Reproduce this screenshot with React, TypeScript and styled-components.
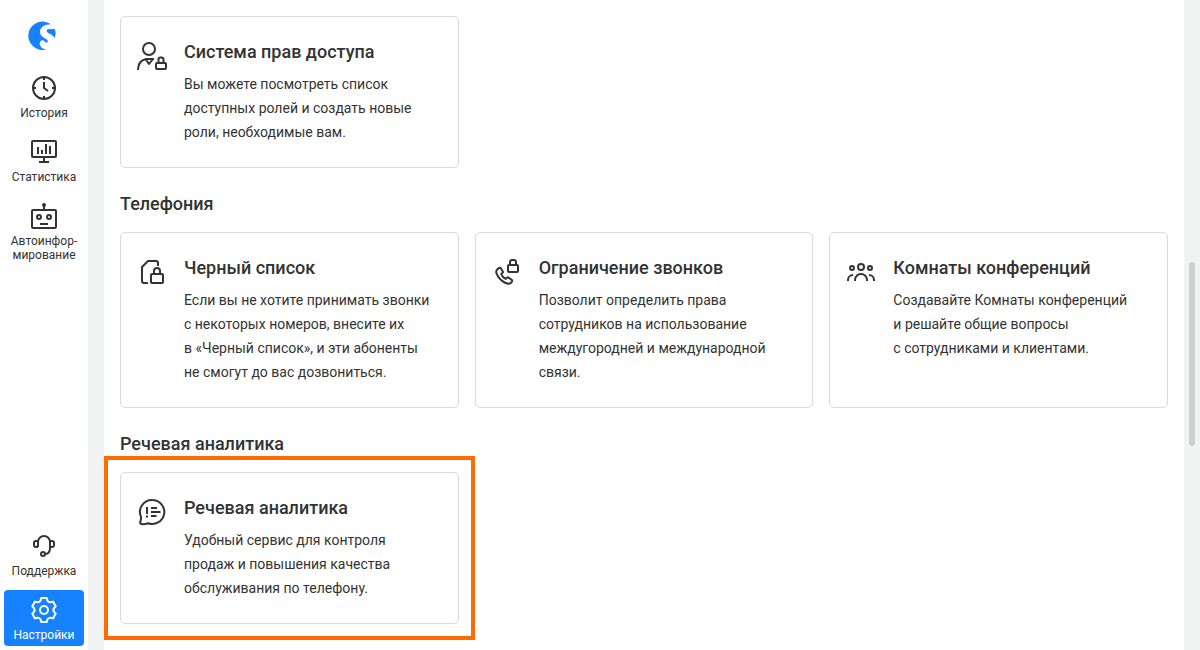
import React from "react";
import styled, { createGlobalStyle } from "styled-components";

const GlobalStyle = createGlobalStyle`
  *, *::before, *::after { box-sizing: border-box; }
  body {
    margin: 0;
    background: #f1f3f3;
    color: #333;
    font-family: Roboto, "Noto Sans", sans-serif;
  }
`;

const Shell = styled.div`
  display: flex;
  gap: 16px;
  height: 100vh;
  overflow: hidden;
`;

const Sidebar = styled.nav`
  flex: 0 0 88px;
  display: flex;
  flex-direction: column;
  gap: 8px;
  padding: 20px 4px 4px;
  background: #fff;
`;

const Logo = styled.a`
  align-self: center;
  width: 32px;
  height: 32px;
  margin-bottom: 8px;
`;

const Spacer = styled.div`
  flex: 1;
`;

const NavItem = styled.a<{ $active?: boolean }>`
  display: flex;
  flex-direction: column;
  align-items: center;
  gap: 2px;
  padding: 4px 0;
  border-radius: 4px;
  font-size: 12px;
  line-height: 14px;
  text-align: center;
  white-space: pre-line;
  text-decoration: none;
  color: ${(p) => (p.$active ? "#fff" : "#333")};
  background: ${(p) => (p.$active ? "#1682ff" : "transparent")};
`;

const Icon = styled.svg`
  display: block;
  flex: none;
  width: 32px;
  height: 32px;
  fill: none;
  stroke: currentColor;
  stroke-width: 2;
  stroke-linejoin: round;
`;

const Content = styled.main`
  flex: 1;
  min-width: 0;
  display: flex;
  flex-direction: column;
  gap: 24px;
  padding: 16px;
  background: #fff;
`;

const Section = styled.section`
  display: flex;
  flex-direction: column;
  gap: 16px;
`;

const SectionTitle = styled.h2`
  margin: 0;
  font-size: 18px;
  line-height: 24px;
  font-weight: 500;
`;

const CardGrid = styled.div`
  display: grid;
  grid-template-columns: repeat(3, minmax(0, 1fr));
  gap: 16px;
`;

const Card = styled.a<{ $highlighted?: boolean }>`
  position: relative;
  display: flex;
  gap: 16px;
  padding: 23px 23px 23px 15px;
  border: 1px solid #d9dbdb;
  border-radius: 5px;
  color: inherit;
  text-decoration: none;

  &::after {
    content: "";
    display: ${(p) => (p.$highlighted ? "block" : "none")};
    position: absolute;
    inset: -17px;
    border: 4px solid #ff6b00;
    pointer-events: none;
  }
`;

const CardBody = styled.div`
  display: flex;
  flex-direction: column;
  gap: 8px;
  min-width: 0;
`;

const CardTitle = styled.h3`
  margin: 0;
  font-size: 18px;
  line-height: 24px;
  font-weight: 500;
`;

const CardText = styled.p`
  margin: 0;
  font-size: 14px;
  line-height: 24px;
`;

const ScrollRail = styled.div`
  flex: 0 0 16px;
  margin-left: -16px;
  padding: 262px 5px 0;
`;

const ScrollThumb = styled.div`
  height: 184px;
  border-radius: 3px;
  background: #cdcfce;
`;

const BrandMark = () => (
  <svg width="32" height="32" viewBox="2.5 0 32 32" overflow="visible" aria-hidden="true">
    <path
      fill="#1682ff"
      d="M25.600 4.300A14.300 14.300 0 1 0 20.500 29.700C17 28.900 14.600 26.900 14.200 24.300C13.900 22.200 15.200 20.300 17 20.300C18.900 20.300 19.200 22.300 20.700 22.500C22 22.600 22.600 21.700 22.300 20.700C21.600 18.600 14.900 17.300 14.500 12.200C14.200 7.600 19 4.200 25.600 4.300Z"
    />
    <path
      fill="#1682ff"
      d="M29.400 9.300C27.600 8.700 26.200 9.700 24.400 9.100C22.600 8.600 20.800 9.600 21.200 11.200C21.800 13.500 27.600 14.200 29 18.100C30.400 15.300 30.500 12.200 29.400 9.300Z"
    />
  </svg>
);

const HistoryIcon = () => (
  <Icon viewBox="0 0 32 32" aria-hidden="true">
    <circle cx="16" cy="16" r="11" />
    <path d="M16 5v3M16 24v3M5 16h3M24 16h3M16 10v6l4 3" />
  </Icon>
);

const StatsIcon = () => (
  <Icon viewBox="0 0 32 32" aria-hidden="true">
    <rect x="4" y="5" width="24" height="16" rx="1" />
    <path d="M16 21v5M11 26h10M10 11v7M14 14v4M18 8v10M22 10v8" />
  </Icon>
);

const RobotIcon = () => (
  <Icon viewBox="0 0 32 32" aria-hidden="true">
    <rect x="4" y="10" width="24" height="18" rx="1" />
    <path d="M16 10V5M12 24h8" />
    <circle cx="16" cy="5" r="1" />
    <circle cx="11" cy="17" r="2" />
    <circle cx="21" cy="17" r="2" />
  </Icon>
);

const HeadsetIcon = () => (
  <Icon viewBox="0 0 32 32" aria-hidden="true">
    <path d="M10 17v-5a6 6 0 0 1 12 0v6c0 3.500-1.700 6-5 6" />
    <path d="M10 11H8a2 2 0 0 0-2 2v2a2 2 0 0 0 2 2h2M22 11h2a2 2 0 0 1 2 2v2a2 2 0 0 1-2 2h-2" />
    <circle cx="15" cy="24" r="2" />
  </Icon>
);

/* Six teeth, each a flat outer edge joined to the next by a concave curve. */
const polar = (radius: number, degrees: number) => {
  const angle = (degrees * Math.PI) / 180;
  return `${(16 + radius * Math.sin(angle)).toFixed(2)} ${(16 - radius * Math.cos(angle)).toFixed(2)}`;
};

const gearPath =
  [0, 60, 120, 180, 240, 300]
    .map(
      (a) =>
        `${a === 0 ? "M" : "L"}${polar(12.3, a - 13)}L${polar(12.3, a + 13)}` +
        `L${polar(10.3, a + 19)}Q${polar(8.6, a + 30)} ${polar(10.3, a + 41)}`
    )
    .join("") + "Z";

const GearIcon = () => (
  <Icon viewBox="0 0 32 32" aria-hidden="true">
    <path d={gearPath} />
    <circle cx="16" cy="16" r="4" />
  </Icon>
);

const AccessIcon = () => (
  <Icon viewBox="0 0 32 32" aria-hidden="true">
    <circle cx="13" cy="9" r="6" />
    <path d="M2 30c0-6 3-10 8-11h8M9.500 19l3.500 5 4-5" />
    <rect x="20" y="23" width="10" height="6" rx="1" />
    <path d="M22.500 23v-3.500a2 2 0 0 1 2-2h1a2 2 0 0 1 2 2V23" />
  </Icon>
);

const BlacklistIcon = () => (
  <Icon viewBox="0 0 32 32" aria-hidden="true">
    <path d="M12 27H8a2 2 0 0 1-2-2V11l6-6h8a2 2 0 0 1 2 2v3" />
    <rect x="15" y="18" width="12" height="9" rx="1" />
    <path d="M18 18v-3a3 3 0 0 1 6 0v3" />
  </Icon>
);

const CallLimitIcon = () => (
  <Icon viewBox="0 0 32 32" aria-hidden="true">
    <path d="M6.400 13.300l1.400-1.300a1.300 1.300 0 0 1 2 .3l1.900 3a1.300 1.300 0 0 1-.3 1.700l-1.200 1c.8 2.200 2.300 3.900 4.500 4.900l1.200-1.200a1.300 1.300 0 0 1 1.600-.1l3.200 2.200a1.300 1.300 0 0 1 .2 1.900l-1.200 1.300c-1.200 1.200-3.400.9-6-.5-3.400-1.900-6.600-5.200-8-8.700-.8-1.900-.4-3.500.7-4.500z" />
    <rect x="17" y="9" width="10" height="7" rx="1" />
    <path d="M19 9V6a2 2 0 0 1 2-2h2a2 2 0 0 1 2 2v3" />
  </Icon>
);

const RoomsIcon = () => (
  <Icon viewBox="0 0 32 32" aria-hidden="true">
    <circle cx="16" cy="11" r="3" />
    <circle cx="7" cy="12" r="2" />
    <circle cx="25" cy="12" r="2" />
    <path d="M10 25v-1a6 6 0 0 1 12 0v1M3 25v-1a5 5 0 0 1 5-5M29 25v-1a5 5 0 0 0-5-5" />
  </Icon>
);

const SpeechIcon = () => (
  <Icon viewBox="0 0 32 32" aria-hidden="true">
    <path d="M16.300 4a12 12 0 1 1-4.300 23.200c-2.200.8-4.300 1.200-6.700.8-1.200-.2-1.400-1.100-1-2.100.6-1.500.9-2.900.6-5.200A12 12 0 0 1 16.300 4z" />
    <path d="M11 11v7M11 19.500v2M15 12h6M15 16h9.500M15 20h5.500" />
  </Icon>
);

interface CardData {
  title: string;
  text: string;
  icon: React.ReactNode;
  highlighted?: boolean;
}

interface SectionData {
  title?: string;
  cards: CardData[];
}

const sections: SectionData[] = [
  {
    cards: [
      {
        title: "Система прав доступа",
        text: "Вы можете посмотреть список доступных ролей и\u00a0создать новые роли, необходимые вам.",
        icon: <AccessIcon />,
      },
    ],
  },
  {
    title: "Телефония",
    cards: [
      {
        title: "Черный список",
        text: "Если вы\u00a0не\u00a0хотите принимать звонки с\u00a0некоторых номеров, внесите\u00a0их в\u00a0«Черный список», и\u00a0эти абоненты не\u00a0смогут до\u00a0вас дозвониться.",
        icon: <BlacklistIcon />,
      },
      {
        title: "Ограничение звонков",
        text: "Позволит определить права сотрудников на\u00a0использование междугородней и\u00a0международной связи.",
        icon: <CallLimitIcon />,
      },
      {
        title: "Комнаты конференций",
        text: "Создавайте Комнаты конференций и\u00a0решайте общие вопросы с\u00a0сотрудниками и\u00a0клиентами.",
        icon: <RoomsIcon />,
      },
    ],
  },
  {
    title: "Речевая аналитика",
    cards: [
      {
        title: "Речевая аналитика",
        text: "Удобный сервис для контроля продаж и\u00a0повышения качества обслуживания по\u00a0телефону.",
        icon: <SpeechIcon />,
        highlighted: true,
      },
    ],
  },
];

export default function App() {
  return (
    <>
      <GlobalStyle />
      <Shell>
        <Sidebar>
          <Logo href="#home" aria-label="Главная">
            <BrandMark />
          </Logo>
          <NavItem href="#history">
            <HistoryIcon />
            История
          </NavItem>
          <NavItem href="#stats">
            <StatsIcon />
            Статистика
          </NavItem>
          <NavItem href="#autoinform">
            <RobotIcon />
            {"Автоинфор-\nмирование"}
          </NavItem>
          <Spacer />
          <NavItem href="#support">
            <HeadsetIcon />
            Поддержка
          </NavItem>
          <NavItem href="#settings" $active>
            <GearIcon />
            Настройки
          </NavItem>
        </Sidebar>
        <Content>
          {sections.map((section, index) => (
            <Section key={index}>
              {section.title && <SectionTitle>{section.title}</SectionTitle>}
              <CardGrid>
                {section.cards.map((card) => (
                  <Card key={card.title} href="#card" $highlighted={card.highlighted}>
                    {card.icon}
                    <CardBody>
                      <CardTitle>{card.title}</CardTitle>
                      <CardText>{card.text}</CardText>
                    </CardBody>
                  </Card>
                ))}
              </CardGrid>
            </Section>
          ))}
        </Content>
        <ScrollRail>
          <ScrollThumb />
        </ScrollRail>
      </Shell>
    </>
  );
}
